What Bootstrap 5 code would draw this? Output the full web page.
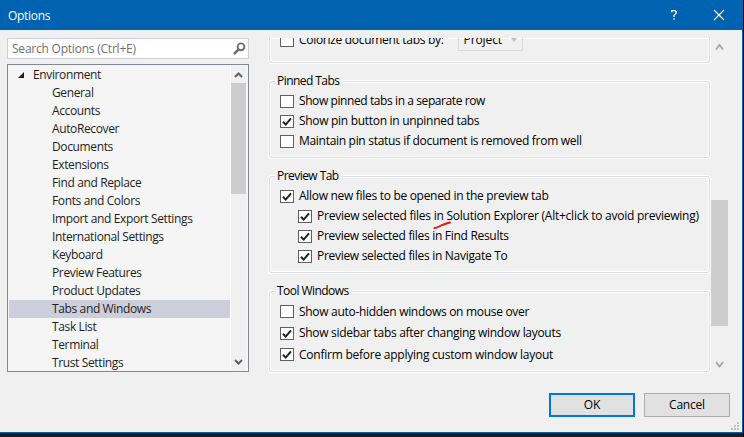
<!DOCTYPE html>
<html lang="en">
<head>
<meta charset="utf-8">
<meta name="viewport" content="width=device-width, initial-scale=1">
<title>Options</title>
<link href="https://cdn.jsdelivr.net/npm/bootstrap@5.3.0/dist/css/bootstrap.min.css" rel="stylesheet">
<style>
html, body { height: 100%; }
body { background: #1b1b1c; font: 12px/18px "Open Sans", "Noto Sans", sans-serif; letter-spacing: -.3px; color: #000; white-space: nowrap; border-right: 1px solid #000; }
svg { display: block; flex: none; }
.dialog-window { height: 433px; background: #f0f0f0; border-right: 1px solid #0063b1; border-bottom: 1px solid #0063b1; }
.titlebar { height: 30px; background: #0063b1; padding: 0 17px 0 8px; }
.titlebar button { line-height: 1; }
.t-title { letter-spacing: -.3px; padding-top: 1px; }
.t-search { letter-spacing: -.22px; }
.tree-side { width: 242px; margin: 8px 0 0 7px; }
.search-box { height: 21px; border: 1px solid #cccedb; color: #717171; padding: 0 2px 0 4px; margin-bottom: 5px; }
.tree-frame { height: 308px; border: 1px solid #828790; background: #f5f5f5; padding: 1px; }
.tree-list { width: 222px; border-right: 1px solid #fff; color: #1e1e1e; letter-spacing: -.37px; }
.tree-list .list-group-item { height: 18px; padding: 0 0 0 43px; background: none; border: 0; color: inherit; border-radius: 0; }
.tree-list .root-item { padding-left: 9px; gap: 9px; letter-spacing: -.37px; }
.tree-list .list-group-item.active { background: #cccedb; color: #1e1e1e; margin-top: 0; }
.bar-a { width: 15px; background: #f0f0f0; }
.bar-a .thumb { height: 111px; background: #cdcdcd; }
.options-pane { width: 443px; height: 336px; margin: 8px 0 0 19px; padding: 0 1px; }
.group-box { border: 1px solid #d5dfe5; border-radius: 3px; box-shadow: 0 0 0 1px #fff, inset 0 0 0 1px #fff; padding-left: 10px; }
.group-title { width: max-content; margin: -10px 0 -1px -5px; padding: 0 4px 0 2px; background: #f0f0f0; height: 20px; line-height: 18px; letter-spacing: -.55px; }
.opt { height: 20px; gap: 5px; }
.opt.sub-opt { padding-left: 18px; }
.box { width: 14px; height: 13px; background: #fff; border: 1px solid #5f5f5f; flex: none; }
.box svg { margin: -1px 0 0 -1px; }
.fit-tight { letter-spacing: -.41px; }
.fit-loose { letter-spacing: -.24px; }
.g-top { display: flow-root; height: 25px; border-top: 0; border-radius: 0 0 3px 3px; clip-path: inset(0 -2px -2px -2px); }
.g-top .opt { margin-top: -8px; }
.g-pinned { height: 77px; margin-top: 18px; }
.g-preview { height: 97px; margin-top: 18px; }
.g-tools { height: 81px; margin-top: 18px; }
.g-tools .opt { height: 21.5px; }
.combo { width: 65px; height: 21px; border: 1px solid #d9d9d9; margin-left: 9px; padding: 0 5px; letter-spacing: -.1px; }
.bar-b { width: 17px; height: 335px; margin-top: 8px; }
.bar-b .thumb { height: 126px; background: #cdcdcd; margin-top: 146px; }
.scribble { left: 433px; top: 221px; }
.actions { gap: 9px; padding-right: 12px; margin-top: 19px; }
.dlg-btn { width: 86px; height: 24px; padding: 0; border: 1px solid #adadad; border-radius: 0; background: #e1e1e1; font-size: 12px; line-height: 22px; color: #000; letter-spacing: -.2px; }
.dlg-btn.main { border: 2px solid #0078d7; line-height: 20px; }
.grip { left: 731px; top: 422px; }
</style>
<script src="https://cdn.jsdelivr.net/npm/bootstrap@5.3.0/dist/js/bootstrap.bundle.min.js"></script>
</head>
<body>
<svg width="0" height="0" class="position-absolute">
  <symbol id="tick" viewBox="0 0 14 13"><path d="M3 6.700 5.700 9.600 11 3.300" fill="none" stroke="#212121" stroke-width="2"/></symbol>
</svg>
<div class="dialog-window position-relative">
  <header class="titlebar d-flex align-items-center text-white">
    <span class="me-auto t-title">Options</span>
    <button class="btn p-0 border-0 me-4" aria-label="Help"><span class="d-block" style="padding-right:3px"><svg width="8" height="12" viewBox="0 0 8 12" fill="none" stroke="#fff" stroke-width="1.3"><path d="M1.800 3.200V1.600H5L6.200 2.700V4L4 6.200V8M4 9.200v1.500"/></svg></span></button>
    <button class="btn p-0 border-0 ms-2" aria-label="Close"><svg width="12" height="12" viewBox="0 0 12 12" stroke="#fff" stroke-width="1.2"><path d="m1 1 10 10M11 1 1 11"/></svg></button>
  </header>
  <div class="d-flex">
    <aside class="tree-side">
      <div class="search-box d-flex align-items-center justify-content-between bg-white">
        <span class="t-search">Search Options (Ctrl+E)</span>
        <svg width="13" height="13" viewBox="0 0 13 13" fill="none" stroke="#717171"><circle cx="8" cy="4.800" r="3.400" stroke-width="1.900"/><path d="M5.500 7.500 1 12" stroke-width="2.500"/></svg>
      </div>
      <div class="tree-frame d-flex">
        <ul class="tree-list list-group rounded-0">
          <li class="list-group-item root-item d-flex align-items-center"><svg width="6" height="6"><path d="M6 0v6H0z" fill="#1e1e1e"/></svg><span>Environment</span></li>
          <li class="list-group-item">General</li>
          <li class="list-group-item">Accounts</li>
          <li class="list-group-item">AutoRecover</li>
          <li class="list-group-item">Documents</li>
          <li class="list-group-item">Extensions</li>
          <li class="list-group-item">Find and Replace</li>
          <li class="list-group-item">Fonts and Colors</li>
          <li class="list-group-item">Import and Export Settings</li>
          <li class="list-group-item">International Settings</li>
          <li class="list-group-item">Keyboard</li>
          <li class="list-group-item">Preview Features</li>
          <li class="list-group-item">Product Updates</li>
          <li class="list-group-item active">Tabs and Windows</li>
          <li class="list-group-item">Task List</li>
          <li class="list-group-item">Terminal</li>
          <li class="list-group-item">Trust Settings</li>
        </ul>
        <div class="bar-a d-flex flex-column">
          <svg width="15" height="17" fill="none" stroke="#606060" stroke-width="2"><path d="m4 11 3.500-3.500L11 11"/></svg>
          <div class="thumb"></div>
          <svg class="mt-auto" width="15" height="17" fill="none" stroke="#606060" stroke-width="2"><path d="m4 7 3.500 3.500L11 7"/></svg>
        </div>
      </div>
    </aside>
    <main class="options-pane">
      <section class="group-box g-top">
        <div class="opt d-flex align-items-center"><span class="box"></span><span>Colorize document tabs by:</span>
          <div class="combo d-flex align-items-center justify-content-between"><span>Project</span><svg width="6" height="4"><path d="M0 0h6L3 4z" fill="#bfbfbf"/></svg></div></div>
      </section>
      <section class="group-box g-pinned">
        <div class="group-title">Pinned Tabs</div>
        <div class="opt d-flex align-items-center"><span class="box"></span><span class="fit-tight">Show pinned tabs in a separate row</span></div>
        <div class="opt d-flex align-items-center"><span class="box"><svg width="14" height="13"><use href="#tick"/></svg></span><span>Show pin button in unpinned tabs</span></div>
        <div class="opt d-flex align-items-center"><span class="box"></span><span>Maintain pin status if document is removed from well</span></div>
      </section>
      <section class="group-box g-preview">
        <div class="group-title">Preview Tab</div>
        <div class="opt d-flex align-items-center"><span class="box"><svg width="14" height="13"><use href="#tick"/></svg></span><span>Allow new files to be opened in the preview tab</span></div>
        <div class="opt sub-opt d-flex align-items-center"><span class="box"><svg width="14" height="13"><use href="#tick"/></svg></span><span class="fit-loose">Preview selected files in Solution Explorer (Alt+click to avoid previewing)</span></div>
        <div class="opt sub-opt d-flex align-items-center"><span class="box"><svg width="14" height="13"><use href="#tick"/></svg></span><span>Preview selected files in Find Results</span></div>
        <div class="opt sub-opt d-flex align-items-center"><span class="box"><svg width="14" height="13"><use href="#tick"/></svg></span><span>Preview selected files in Navigate To</span></div>
      </section>
      <section class="group-box g-tools">
        <div class="group-title">Tool Windows</div>
        <div class="opt d-flex align-items-center"><span class="box"></span><span>Show auto-hidden windows on mouse over</span></div>
        <div class="opt d-flex align-items-center"><span class="box"><svg width="14" height="13"><use href="#tick"/></svg></span><span>Show sidebar tabs after changing window layouts</span></div>
        <div class="opt d-flex align-items-center"><span class="box"><svg width="14" height="13"><use href="#tick"/></svg></span><span class="fit-loose">Confirm before applying custom window layout</span></div>
      </section>
    </main>
    <div class="bar-b d-flex flex-column">
      <svg width="17" height="16" fill="none" stroke="#a3a3a3" stroke-width="1.700"><path d="m5 11.500 3.500-4.500 3.500 4.500"/></svg>
      <div class="thumb"></div>
      <svg class="mt-auto" width="17" height="17" fill="none" stroke="#a3a3a3" stroke-width="1.700"><path d="m5 6 3.500 4.500L12 6"/></svg>
    </div>
  </div>
  <footer class="actions d-flex justify-content-end">
    <button class="btn dlg-btn main">OK</button>
    <button class="btn dlg-btn">Cancel</button>
  </footer>
  <svg class="scribble position-absolute" width="20" height="9" fill="none" stroke="#f01018" stroke-width="1.900" stroke-linecap="round"><path d="M1.500 7C4 7 5 6 8 4.500S13 2.500 17 1.500"/></svg>
  <svg class="grip position-absolute" width="9" height="9" fill="#bfbfbf"><path d="M6 0h2v2H6zM3 3h2v2H3zM6 3h2v2H6zM0 6h2v2H0zM3 6h2v2H3zM6 6h2v2H6z"/></svg>
</div>
</body>
</html>
